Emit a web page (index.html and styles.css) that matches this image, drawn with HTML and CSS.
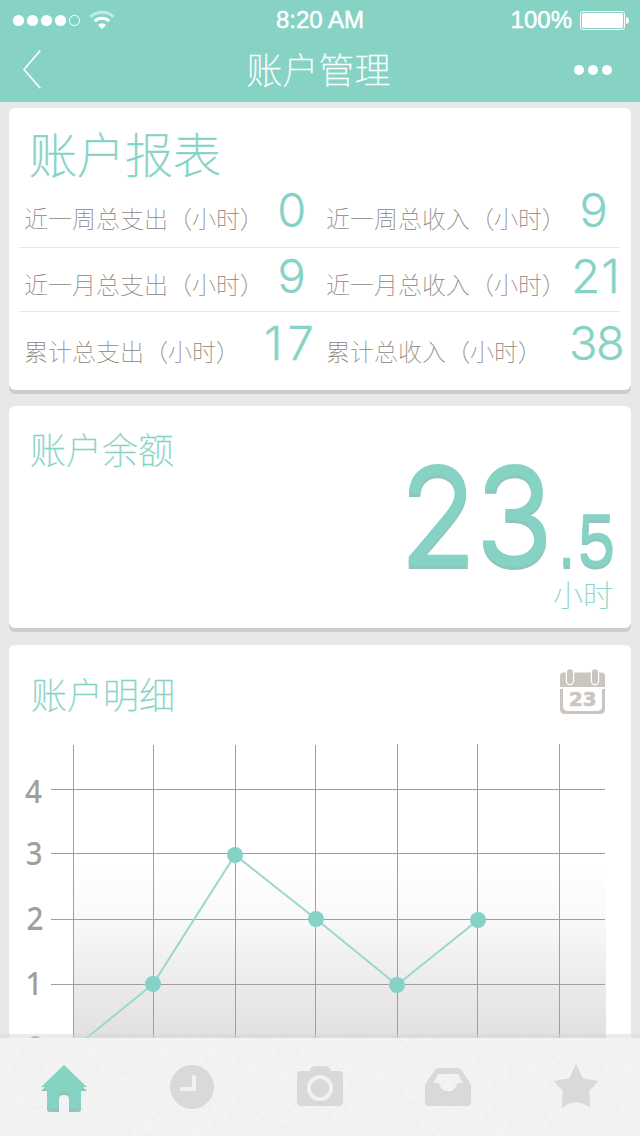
FILE: index.html
```html
<!DOCTYPE html>
<html lang="zh-CN">
<head>
<meta charset="utf-8">
<title>账户管理</title>
<link rel="stylesheet" href="styles.css">
</head>
<body>
<div class="screen">
  <header class="header">
    <div class="status">
      <svg class="signal" width="104" height="24" viewBox="12 8 104 24">
        <g fill="#fff"><circle cx="18.5" cy="20.5" r="5.6"/><circle cx="32.5" cy="20.5" r="5.6"/><circle cx="46.5" cy="20.5" r="5.6"/><circle cx="60.5" cy="20.5" r="5.6"/></g>
        <circle cx="74.5" cy="20.5" r="5.1" fill="none" stroke="#fff"/>
        <g fill="none" stroke="#fff" stroke-width="3">
          <path d="M90.6 16.8A16.5 16.5 0 0 1 113.4 16.8" opacity=".5"/>
          <path d="M94.8 21.2A10.4 10.4 0 0 1 109.2 21.2"/>
        </g>
        <path d="M102 29L97.9 24.9A6 6 0 0 1 106.1 24.9Z" fill="#fff"/>
      </svg>
      <span class="time">8:20 AM</span>
      <span class="battery"><span class="percent">100%</span>
        <svg width="50" height="20" viewBox="580 10 50 20">
          <rect x="580.5" y="11.5" width="44" height="18" rx="2.5" fill="none" stroke="#fff"/>
          <rect x="582" y="13" width="41" height="15" rx="1.8" fill="#fff"/>
          <path d="M626 17.2Q629 17.8 629 20.5T626 24Z" fill="#fff"/>
        </svg>
      </span>
    </div>
    <nav class="nav">
      <svg width="24" height="44" viewBox="20 48 24 44"><path d="M40.3 50.5L24 69.5L40.3 88.3" fill="none" stroke="#fff" stroke-width="1.6"/></svg>
      <h1 class="nav-title">账户管理</h1>
      <svg width="40" height="12" viewBox="573 64 40 12" fill="#fff"><circle cx="579" cy="70" r="5"/><circle cx="593" cy="70" r="5"/><circle cx="607" cy="70" r="5"/></svg>
    </nav>
  </header>

  <main class="content">
    <section class="card report">
      <h2 class="report-title">账户报表</h2>
      <div class="row first">
        <span class="label">近一周总支出（小时）</span><b class="num">0</b>
        <span class="label">近一周总收入（小时）</span><b class="num single">9</b>
      </div>
      <div class="row">
        <span class="label">近一月总支出（小时）</span><b class="num">9</b>
        <span class="label">近一月总收入（小时）</span><b class="num spaced">21</b>
      </div>
      <div class="row last">
        <span class="label">累计总支出（小时）</span><b class="num wide">17</b>
        <span class="label">累计总收入（小时）</span><b class="num">38</b>
      </div>
    </section>

    <section class="card balance">
      <h2 class="card-title">账户余额</h2>
      <div class="amount"><span class="whole">23</span><span class="fraction">.5</span></div>
      <div class="unit">小时</div>
    </section>

    <section class="card detail">
      <div class="detail-head">
        <h2 class="card-title">账户明细</h2>
        <svg class="calendar" width="46" height="46" viewBox="560 669 46 46">
          <path d="M560 687V676Q560 672.5 563.5 672.5H601.5Q605 672.5 605 676V687Z" fill="#cac5be"/>
          <path d="M560 689H605V709Q605 714 600 714H565Q560 714 560 709Z" fill="#cac5be"/>
          <path d="M563 689H602V706Q602 711 597 711H568Q563 711 563 706Z" fill="#fff"/>
          <g fill="#cac5be" stroke="#fff" stroke-width="1.2"><rect x="566.4" y="668.6" width="7.2" height="16" rx="3.6"/><rect x="591.4" y="668.6" width="7.2" height="16" rx="3.6"/></g>
          <text class="cal-day" x="569" y="706" textLength="27.5" lengthAdjust="spacingAndGlyphs">23</text>
        </svg>
      </div>
      <svg class="chart" width="622" height="298" viewBox="9 740 622 298">
        <defs><linearGradient id="shade" x1="0" y1="0" x2="0" y2="1"><stop offset="0" stop-color="#fff"/><stop offset=".3" stop-color="#f9f9f9"/><stop offset=".65" stop-color="#edecec"/><stop offset="1" stop-color="#e1e0de"/></linearGradient></defs>
        <rect x="73" y="866" width="533" height="174" fill="url(#shade)"/>
        <g stroke="#a39e99">
          <path d="M73.5 745V1038M153.5 745V1038M235.5 745V1038M315.5 745V1038M397.5 744V1038M477.5 744V1038M559.5 744V1038"/>
          <path d="M51 789.5H605M51 853.5H605M51 919.5H605M51 984.5H605"/>
        </g>
        <path d="M72 1050L153 984L235 855L316 919L397 985L478 920" fill="none" stroke="#99d8cd" stroke-width="2"/>
        <g fill="#86d2c6"><circle cx="153" cy="984" r="8"/><circle cx="235" cy="855" r="8"/><circle cx="316" cy="919" r="8"/><circle cx="397" cy="985" r="8"/><circle cx="478" cy="920" r="8"/></g>
        <g class="axis"><text x="25" y="803" textLength="17" lengthAdjust="spacingAndGlyphs">4</text><text x="26" y="865" textLength="16.5" lengthAdjust="spacingAndGlyphs">3</text><text x="26.5" y="930" textLength="17" lengthAdjust="spacingAndGlyphs">2</text><text x="25.5" y="995" textLength="17" lengthAdjust="spacingAndGlyphs">1</text><text x="27" y="1059" textLength="17" lengthAdjust="spacingAndGlyphs">0</text></g>
      </svg>
    </section>
  </main>

  <footer class="tabbar">
    <svg class="paper" width="640" height="98"><filter id="grain" x="0" y="0" width="100%" height="100%"><feTurbulence type="fractalNoise" baseFrequency=".25" numOctaves="3" seed="4"/><feColorMatrix values="0 0 0 0 1  0 0 0 0 1  0 0 0 0 1  1.6 0 0 0 -.55"/></filter><rect width="640" height="98" filter="url(#grain)"/></svg>
    <a class="tab"><svg width="48" height="50" viewBox="40 1063 48 50">
      <path d="M64 1069L87 1091H81V1109Q81 1112 78 1112H69V1100Q69 1095 64 1095T59 1100V1112H50Q47 1112 47 1109V1091H41Z" fill="#8fc5bb"/>
      <path d="M64 1065L87 1087H81V1108H69V1096Q69 1091 64 1091T59 1096V1108H47V1087H41Z" fill="#86d3c6"/>
      <path d="M59 1096Q59 1091 64 1091T69 1096V1100H59Z" fill="#8fc5bb"/>
      <path d="M59 1112V1099Q59 1095 64 1095T69 1099V1112Z" fill="#f3f3f3"/></svg></a>
    <a class="tab"><svg width="48" height="50" viewBox="168 1063 48 50"><circle cx="192" cy="1087" r="22" fill="#dad9d8"/><path d="M194 1077V1089H182" fill="none" stroke="#f2f2f2" stroke-width="4" stroke-linecap="round" stroke-linejoin="round"/></svg></a>
    <a class="tab"><svg width="48" height="50" viewBox="296 1063 48 50"><path d="M301 1071H309L311.5 1067.5Q312.5 1066 314.5 1066H325.5Q327.5 1066 328.5 1067.5L331 1071H339Q343 1071 343 1075V1102Q343 1106 339 1106H301Q297 1106 297 1102V1075Q297 1071 301 1071Z" fill="#dad9d8"/><circle cx="320" cy="1088" r="11.2" fill="none" stroke="#f2f2f2" stroke-width="3.8"/></svg></a>
    <a class="tab"><svg width="48" height="50" viewBox="424 1063 48 50"><path fill-rule="evenodd" d="M439 1068H457.5Q460 1068 461.5 1070L470 1083Q471 1084.5 471 1087V1102Q471 1106 467 1106H429Q425 1106 425 1102V1087Q425 1084.5 426 1083L435 1070Q436.5 1068 439 1068ZM438.5 1074L433 1083H439A9.2 9.2 0 0 0 457.3 1083H463L458.5 1074Z" fill="#dad9d8"/></svg></a>
    <a class="tab"><svg width="48" height="50" viewBox="552 1063 48 50"><path d="M576 1065.5L582.5 1079L597 1081.5L588.5 1090.5L589.3 1106.5Q576 1096.5 562.7 1106.5L563.5 1090.5L555 1081.5L569.5 1079Z" fill="#dad9d8" stroke="#dad9d8" stroke-width="1.5" stroke-linejoin="round"/></svg></a>
  </footer>
</div>
</body>
</html>
```
FILE: styles.css
```css
* { box-sizing: border-box; }
body { margin: 0; font-family: "Noto Sans CJK SC", sans-serif; }
h1, h2 { margin: 0; font-weight: 100; }
svg { display: block; flex: none; }
.screen { width: 640px; height: 1136px; display: flex; flex-direction: column; overflow: hidden; background: #e8e8e8; }
.header { height: 102px; flex: none; background: #86d3c6; color: #fff; }
.status { height: 40px; display: grid; grid-template-columns: 1fr auto 1fr; align-items: center; padding: 0 10px 0 12px; font-family: "Liberation Sans", Arial, sans-serif; font-size: 24px; line-height: 40px; -webkit-text-stroke: .5px #fff; }
.time { margin: 0 1px 0 -1px; }
.signal { -webkit-text-stroke: 0; }
.battery { display: flex; align-items: center; justify-content: flex-end; gap: 8px; }
.nav { height: 60px; display: grid; grid-template-columns: 1fr 144px 1fr; align-items: center; padding: 0 27px 0 20px; }
.nav svg:last-child { justify-self: end; }
.nav-title { font-size: 36px; line-height: 56px; padding-bottom: 4px; margin: 0 -2px 0 2px; white-space: nowrap; -webkit-text-stroke: .4px #fff; }

.content { flex: 1; min-height: 0; overflow: hidden; padding: 6px 9px 0; }
.card { background: #fff; border-radius: 6px; box-shadow: 0 4px 0 #cdcdcd; }
.card-title { font-size: 36px; line-height: 48px; color: #86d3c6; -webkit-text-stroke: .4px #86d3c6; }

.report { height: 282px; padding: 14px 11px 0 10px; }
.report-title { font-size: 48px; line-height: 60px; padding-left: 10px; color: #86d3c6; -webkit-text-stroke: .7px #86d3c6; }
.row { height: 64px; display: grid; grid-template-columns: 240px 54px 240px 54px; padding-left: 5px; border-bottom: 1px solid #e6e6e6; }
.row.first { height: 66px; }
.row.last { border: 0; }
.row .label:nth-child(3) { margin-left: 8px; }
.row .num:nth-child(4) { margin-left: 11px; margin-right: -11px; }
.row .num.single { margin-left: 8px; margin-right: -8px; }
.label { font-size: 24px; line-height: 36px; padding-top: 18px; font-weight: 100; color: #8d857c; white-space: nowrap; -webkit-text-stroke: .1px #8d857c; }
.last .label { padding-top: 21px; }
.num { font: 300 47px/50px Inter, sans-serif; color: #86d3c6; text-align: center; padding-top: 3px; letter-spacing: -1.5px; -webkit-text-stroke: .3px #86d3c6; }
.num.spaced { letter-spacing: 1px; }
.num.wide { letter-spacing: 5px; }
.last .num { padding-top: 6px; }

.balance { height: 222px; margin-top: 16px; padding: 18px 18px 0 21px; display: flex; flex-direction: column; }
.amount { height: 98px; display: flex; justify-content: flex-end; align-items: baseline; font-family: Inter, sans-serif; color: #86d3c6; line-height: 88px; text-shadow: 0 3px 0 #8fc5bb; }
.whole { font-size: 138px; font-weight: 400; letter-spacing: -1.5px; transform: scaleX(.92); transform-origin: right; margin-right: -1px; }
.fraction { font-family: "Liberation Sans", Arial, sans-serif; font-size: 74px; line-height: 66px; -webkit-text-stroke: .6px #86d3c6; transform: scaleX(.9); transform-origin: right; letter-spacing: 2px; margin-right: -4px; }
.unit { font-size: 30px; line-height: 40px; padding-top: 3px; font-weight: 100; color: #86d3c6; text-align: right; -webkit-text-stroke: .2px #86d3c6; }

.detail { height: 440px; margin-top: 17px; }
.detail-head { height: 95px; display: flex; justify-content: space-between; padding: 24px 25px 0 22px; }
.cal-day { font: bold 20px "DejaVu Sans", sans-serif; fill: #cac5be; stroke: #cac5be; stroke-width: .6px; }
.axis { font: 500 32px "Noto Sans", sans-serif; fill: #a39e96; }

.tabbar { height: 102px; flex: none; margin-top: -4px; position: relative; display: grid; grid-template-columns: repeat(5, 1fr); background: #f1f1f1; background-clip: padding-box; border-top: 4px solid rgba(216, 216, 216, .5); }
.paper { position: absolute; left: 0; top: 0; opacity: .4; }
.tab { position: relative; display: flex; justify-content: center; padding-top: 25px; }
```
